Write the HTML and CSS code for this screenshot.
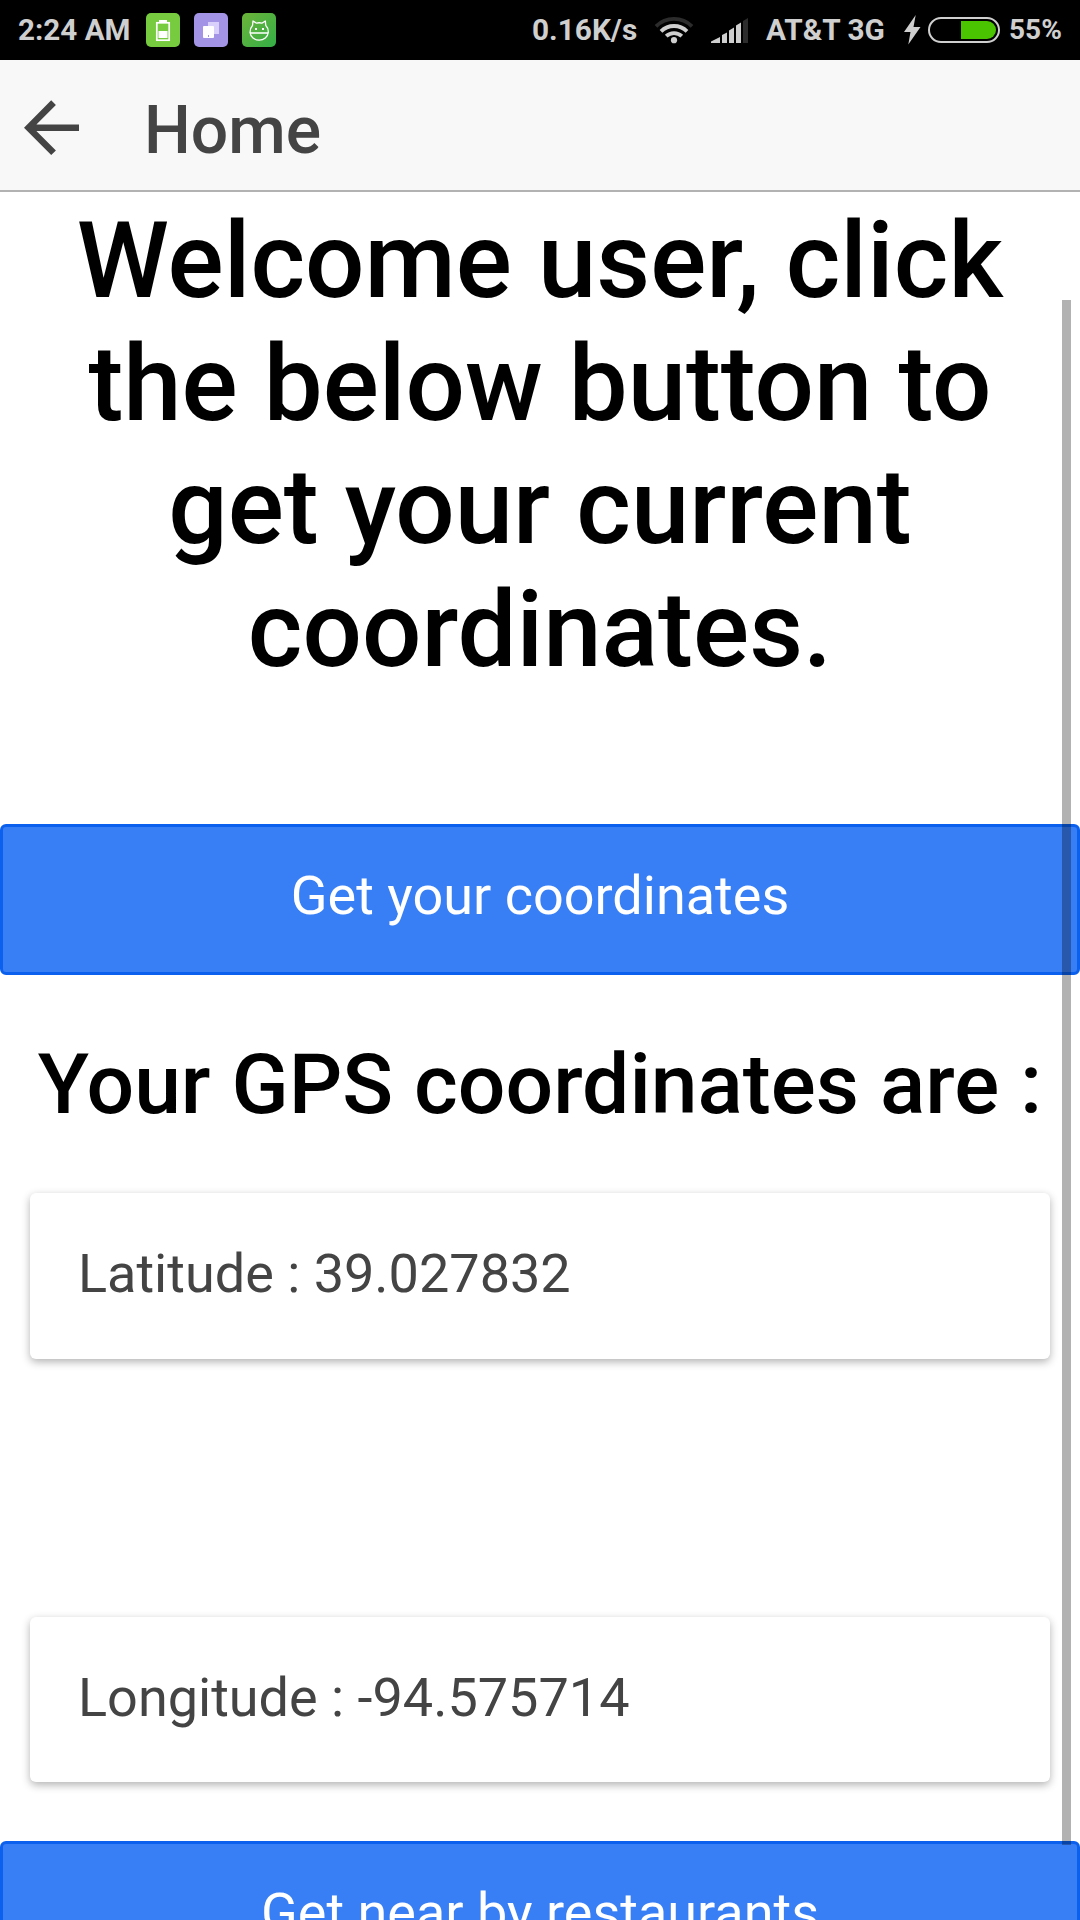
FILE: index.html
```
<!DOCTYPE html>
<html lang="en">
<head>
<meta charset="utf-8">
<title>Home</title>
<link rel="stylesheet" href="styles.css">
</head>
<body>
<div class="screen">
  <div class="status">
    <span class="status-text time">2:24 AM</span>
    <div class="apps">
      <svg class="app" viewBox="0 0 34 34">
        <rect width="34" height="34" rx="5" fill="#76cc3e"/>
        <rect x="13" y="7" width="8" height="2" fill="#fff"/>
        <rect x="10.8" y="9.8" width="12.4" height="17.4" fill="none" stroke="#fff" stroke-width="1.7"/>
        <rect x="12.5" y="18" width="9" height="7" fill="#fff"/>
      </svg>
      <svg class="app purple" viewBox="0 0 34 34">
        <rect width="34" height="34" rx="5" fill="#a394e6"/>
        <rect x="14" y="9" width="11" height="12" fill="#d9d0fb"/>
        <rect x="9" y="13" width="11" height="12" rx="1" fill="#fff"/>
        <rect x="14" y="22" width="1" height="2" fill="#a394e6"/>
      </svg>
      <svg class="app" viewBox="0 0 34 34">
        <defs><linearGradient id="leaf" x1="0" y1="0" x2="1" y2="1"><stop offset="0" stop-color="#6cb33a"/><stop offset="1" stop-color="#33ae46"/></linearGradient></defs>
        <rect width="34" height="34" rx="5" fill="url(#leaf)"/>
        <path d="M10.500 12.500L11 8l3.500 2.200q2.700-.9 5.400 0L23.300 8l.5 4.500Q26.500 15 26.300 19.500A9.200 8.500 0 0 1 8 19.500Q8 15 10.500 12.500ZM8 20h18.300" fill="none" stroke="#fff" stroke-width="1.300" stroke-linejoin="round"/>
        <rect x="13" y="15" width="2" height="2" fill="#fff"/>
        <rect x="20" y="15" width="2" height="2" fill="#fff"/>
      </svg>
    </div>
    <span class="status-text speed">0.16K/s</span>
    <svg class="wifi" viewBox="0 0 40 28">
      <g fill="none" stroke="#cfcfcf" stroke-width="3.800">
        <path stroke="#2c2c2c" d="M2 10.300A25.500 25.500 0 0 1 38 10.300"/>
        <path d="M7 15.400A18.400 18.400 0 0 1 33 15.400"/>
        <path d="M12.200 20.200A11.300 11.300 0 0 1 27.800 20.200"/>
      </g>
      <circle cx="20" cy="24.200" r="3.100" fill="#cfcfcf"/>
    </svg>
    <svg class="signal" viewBox="0 0 38 26">
      <path fill="#cfcfcf" d="M0 25v-1.500L9 19v6ZM11 25v-8l5-2.500V25ZM18 25V12.500L23 9.500V25ZM25 25V7.500l5-3V25Z"/>
      <path fill="#2c2c2c" d="M32 25V3l5-3v25Z"/>
    </svg>
    <span class="status-text carrier">AT&amp;T 3G</span>
    <svg class="bolt" viewBox="0 0 17 30"><path fill="#cfcfcf" d="M11.700 0L0 17h6.500L4.300 29.500 16.500 12h-7Z"/></svg>
    <svg class="battery" viewBox="0 0 72 26">
      <rect x="1" y="1" width="70" height="24" rx="12" fill="none" stroke="#cfcfcf" stroke-width="2"/>
      <path d="M33 4h26a9 9 0 0 1 0 18H33Z" fill="#4ac400"/>
    </svg>
    <span class="status-text percent">55%</span>
  </div>

  <header class="bar">
    <svg class="back" viewBox="0 0 56 56"><path fill="#444" d="M0 27.700L27.200.2l4.700 4.700L12.400 24.400H55V31H12.400l19.500 19.400-4.700 4.700Z"/></svg>
    <div class="title">Home</div>
  </header>

  <main class="content">
    <h1 class="welcome">Welcome user, click<br>the below button to<br>get your current<br>coordinates.</h1>
    <button class="button">Get your coordinates</button>
    <h2 class="subtitle">Your GPS coordinates are :</h2>
    <div class="card">Latitude : 39.027832</div>
    <div class="card second">Longitude : -94.575714</div>
    <button class="button last">Get near by restaurants</button>
  </main>
  <div class="scroll-indicator"></div>
</div>
</body>
</html>
```
FILE: styles.css
```
* { box-sizing: border-box; }

html, body { margin: 0; }

body {
  background: #fff;
  font-family: Roboto, "Noto Sans", sans-serif;
}

.screen {
  position: relative;
  display: flex;
  flex-direction: column;
  width: 1080px;
  height: 1920px;
  overflow: hidden;
}

.status {
  flex: none;
  display: flex;
  align-items: flex-start;
  height: 60px;
  padding-left: 18px;
  background: #000;
  color: #cfcfcf;
}

.status svg { flex: none; display: block; }

.status-text {
  flex: none;
  font-size: 29.8px;
  font-weight: 700;
  line-height: 60px;
  white-space: nowrap;
}

.time { width: 128px; font-size: 29.6px; }
.apps { display: flex; gap: 14px; width: 386px; padding-top: 13px; }
.app { width: 34px; height: 34px; }
.speed { width: 122px; }
.wifi { width: 40px; height: 28px; margin: 16px 17px 0 0; }
.signal { width: 38px; height: 26px; margin: 18px 17px 0 0; }
.carrier { width: 138px; }
.bolt { width: 17px; height: 30px; margin: 15px 7px 0 0; }
.battery { width: 72px; height: 26px; margin: 17px 9px 0 0; }
.percent { font-size: 28px; }

.bar {
  flex: none;
  display: flex;
  align-items: flex-start;
  height: 132px;
  padding-left: 24px;
  background: #f8f8f8;
  border-bottom: 2px solid #b2b2b2;
  color: #444;
}

.back { width: 56px; height: 56px; margin-top: 40px; }

.title {
  margin-left: 64px;
  font-size: 66px;
  font-weight: 500;
  line-height: 141px;
  height: 130px;
}

.content {
  flex: 1;
  display: flex;
  flex-direction: column;
  min-height: 0;
  padding-top: 8px;
}

.welcome {
  margin: 0 0 132px;
  font-size: 104.8px;
  font-weight: 500;
  line-height: 123px;
  text-align: center;
  color: #000;
}

.button {
  flex: none;
  width: 100%;
  height: 151px;
  padding: 0 0 7px;
  border: 3px solid #0c60ee;
  border-radius: 6px;
  background: #387ef5;
  color: #fff;
  font-family: inherit;
  font-size: 54px;
  line-height: 138px;
  text-align: center;
}

.subtitle {
  margin: 60px 0 59px;
  font-size: 84px;
  font-weight: 500;
  line-height: 99px;
  text-align: center;
  white-space: nowrap;
  color: #000;
}

.card {
  flex: none;
  height: 166px;
  margin: 0 30px;
  padding: 49px 48px;
  border-radius: 6px;
  background: #fff;
  box-shadow: 0 3px 9px rgba(0, 0, 0, 0.3);
  color: #444;
  font-size: 54px;
  line-height: 63px;
}

.second {
  height: 165px;
  margin-top: 258px;
}

.last { margin-top: 59px; }

.scroll-indicator {
  position: absolute;
  top: 300px;
  right: 9px;
  width: 9px;
  height: 1545px;
  background: rgba(0, 0, 0, 0.3);
}
```
